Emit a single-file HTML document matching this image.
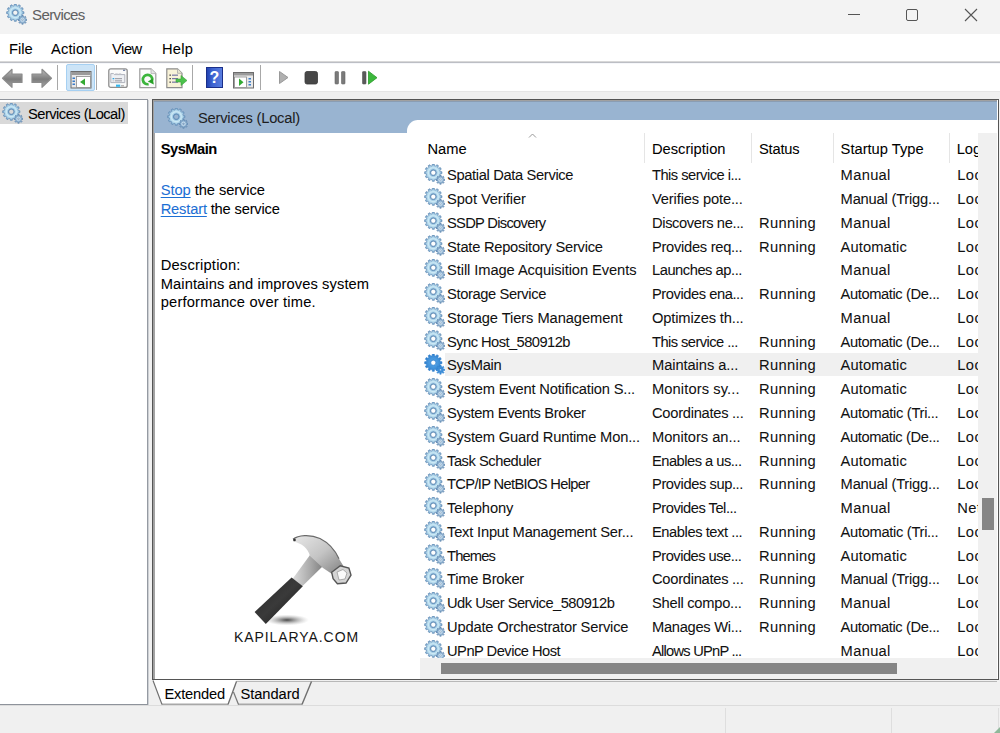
<!DOCTYPE html>
<html><head><meta charset="utf-8">
<style>
*{box-sizing:border-box;margin:0;padding:0}
html,body{width:1000px;height:733px;overflow:hidden;background:#f0f0f0;font-family:"Liberation Sans",sans-serif;font-size:14px;color:#000}
.a{position:absolute}
.t{position:absolute;white-space:nowrap;line-height:16px;-webkit-text-stroke:0.05px currentColor}
.c{position:absolute;white-space:nowrap;line-height:16px;color:#111;font-size:14.7px;-webkit-text-stroke:0.05px currentColor}
.sel{background:#f0f0f0}
a{color:#1c6fd4;text-decoration:underline;text-decoration-thickness:1.4px;text-decoration-skip-ink:none;text-underline-offset:2px}
</style></head><body>
<svg width="0" height="0" style="position:absolute">
<defs>
<radialGradient id="gg" cx="9.3" cy="8.7" r="8.8" gradientUnits="userSpaceOnUse">
<stop offset="0" stop-color="#3a6897"/><stop offset="0.3" stop-color="#4f7fae"/><stop offset="0.4" stop-color="#9cc6e2"/><stop offset="0.55" stop-color="#cdeaf6"/><stop offset="0.78" stop-color="#a6cee6"/><stop offset="1" stop-color="#6893bd"/>
</radialGradient>
<radialGradient id="gs" cx="16.5" cy="15.8" r="4.6" gradientUnits="userSpaceOnUse">
<stop offset="0" stop-color="#ffffff"/><stop offset="0.25" stop-color="#dcecf6"/><stop offset="0.5" stop-color="#9fc0dc"/><stop offset="1" stop-color="#6a90b8"/>
</radialGradient>
<radialGradient id="gb" cx="9.3" cy="8.7" r="8.8" gradientUnits="userSpaceOnUse">
<stop offset="0" stop-color="#2c74c0"/><stop offset="0.4" stop-color="#4a9ae0"/><stop offset="0.7" stop-color="#3e8fd8"/><stop offset="1" stop-color="#2f7ac6"/>
</radialGradient>
<symbol id="gear" viewBox="0 0 21 21">
<path fill="url(#gg)" stroke="#6790b9" stroke-width="0.7" fill-rule="evenodd" d="M8.10 1.80 L8.35 0.05 L10.25 0.05 L10.50 1.80 L11.71 2.13 L12.80 0.73 L14.45 1.69 L13.79 3.33 L14.67 4.21 L16.31 3.55 L17.27 5.20 L15.87 6.29 L16.20 7.50 L17.95 7.75 L17.95 9.65 L16.20 9.90 L15.87 11.11 L17.27 12.20 L16.31 13.85 L14.67 13.19 L13.79 14.07 L14.45 15.71 L12.80 16.67 L11.71 15.27 L10.50 15.60 L10.25 17.35 L8.35 17.35 L8.10 15.60 L6.89 15.27 L5.80 16.67 L4.15 15.71 L4.81 14.07 L3.93 13.19 L2.29 13.85 L1.33 12.20 L2.73 11.11 L2.40 9.90 L0.65 9.65 L0.65 7.75 L2.40 7.50 L2.73 6.29 L1.33 5.20 L2.29 3.55 L3.93 4.21 L4.81 3.33 L4.15 1.69 L5.80 0.73 L6.89 2.13Z M11.80 8.70 A2.5 2.5 0 1 0 6.80 8.70 A2.5 2.5 0 1 0 11.80 8.70Z"/>
<path fill="url(#gs)" stroke="#5e86ae" stroke-width="0.6" fill-rule="evenodd" d="M15.76 12.79 L15.85 11.35 L17.15 11.35 L17.24 12.79 L18.11 13.15 L19.19 12.19 L20.11 13.11 L19.15 14.19 L19.51 15.06 L20.95 15.15 L20.95 16.45 L19.51 16.54 L19.15 17.41 L20.11 18.49 L19.19 19.41 L18.11 18.45 L17.24 18.81 L17.15 20.25 L15.85 20.25 L15.76 18.81 L14.89 18.45 L13.81 19.41 L12.89 18.49 L13.85 17.41 L13.49 16.54 L12.05 16.45 L12.05 15.15 L13.49 15.06 L13.85 14.19 L12.89 13.11 L13.81 12.19 L14.89 13.15Z M17.40 15.80 A0.9 0.9 0 1 0 15.60 15.80 A0.9 0.9 0 1 0 17.40 15.80Z"/>
</symbol>
<symbol id="gearb" viewBox="0 0 21 21">
<path fill="url(#gb)" stroke="#2f7fcf" stroke-width="0.6" fill-rule="evenodd" d="M8.10 1.80 L8.35 0.05 L10.25 0.05 L10.50 1.80 L11.71 2.13 L12.80 0.73 L14.45 1.69 L13.79 3.33 L14.67 4.21 L16.31 3.55 L17.27 5.20 L15.87 6.29 L16.20 7.50 L17.95 7.75 L17.95 9.65 L16.20 9.90 L15.87 11.11 L17.27 12.20 L16.31 13.85 L14.67 13.19 L13.79 14.07 L14.45 15.71 L12.80 16.67 L11.71 15.27 L10.50 15.60 L10.25 17.35 L8.35 17.35 L8.10 15.60 L6.89 15.27 L5.80 16.67 L4.15 15.71 L4.81 14.07 L3.93 13.19 L2.29 13.85 L1.33 12.20 L2.73 11.11 L2.40 9.90 L0.65 9.65 L0.65 7.75 L2.40 7.50 L2.73 6.29 L1.33 5.20 L2.29 3.55 L3.93 4.21 L4.81 3.33 L4.15 1.69 L5.80 0.73 L6.89 2.13Z M11.80 8.70 A2.5 2.5 0 1 0 6.80 8.70 A2.5 2.5 0 1 0 11.80 8.70Z"/>
<path fill="#3d8ed8" stroke="#2f7fcf" stroke-width="0.5" fill-rule="evenodd" d="M15.76 12.79 L15.85 11.35 L17.15 11.35 L17.24 12.79 L18.11 13.15 L19.19 12.19 L20.11 13.11 L19.15 14.19 L19.51 15.06 L20.95 15.15 L20.95 16.45 L19.51 16.54 L19.15 17.41 L20.11 18.49 L19.19 19.41 L18.11 18.45 L17.24 18.81 L17.15 20.25 L15.85 20.25 L15.76 18.81 L14.89 18.45 L13.81 19.41 L12.89 18.49 L13.85 17.41 L13.49 16.54 L12.05 16.45 L12.05 15.15 L13.49 15.06 L13.85 14.19 L12.89 13.11 L13.81 12.19 L14.89 13.15Z M17.40 15.80 A0.9 0.9 0 1 0 15.60 15.80 A0.9 0.9 0 1 0 17.40 15.80Z"/>
</symbol>
</defs></svg>

<!-- title bar -->
<div class="a" style="left:0;top:0;width:1000px;height:34px;background:#f3f3f3"></div>
<svg class="a" style="left:6px;top:4px" width="21" height="21"><use href="#gear"/></svg>
<div class="t" style="left:32px;top:6.7px;font-size:15px;letter-spacing:-0.6px;color:#606060">Services</div>
<div class="a" style="left:848px;top:14px;width:12px;height:1px;background:#555"></div>
<div class="a" style="left:906px;top:9px;width:12px;height:12px;border:1px solid #555;border-radius:2px"></div>
<svg class="a" style="left:964px;top:8px" width="14" height="14"><path d="M1 1L13 13M13 1L1 13" stroke="#555" stroke-width="1.1"/></svg>

<!-- menu -->
<div class="a" style="left:0;top:34px;width:1000px;height:28px;background:#fff"></div>
<div class="t" style="left:9px;top:40.9px;font-size:14.7px">File</div>
<div class="t" style="left:51px;top:40.9px;font-size:14.7px;letter-spacing:0.12px">Action</div>
<div class="t" style="left:112px;top:40.9px;font-size:14.7px;letter-spacing:-0.45px">View</div>
<div class="t" style="left:162px;top:40.9px;font-size:14.7px;letter-spacing:0.2px">Help</div>
<div class="a" style="left:0;top:61px;width:1000px;height:1px;background:#d8d8d8"></div>
<div class="a" style="left:0;top:62px;width:1000px;height:1px;background:#bcbec4"></div>

<!-- toolbar -->
<div class="a" style="left:0;top:63px;width:1000px;height:28px;background:#fff"></div>
<div class="a" style="left:0;top:63px;width:1000px;height:1px;background:#f6f7fa"></div>
<div class="a" style="left:0;top:91px;width:1000px;height:1px;background:#e6e6e6"></div>
<!-- back / forward arrows -->
<svg class="a" style="left:1px;top:68px" width="52" height="21">
<defs><linearGradient id="ag" x1="0" y1="0" x2="0" y2="1"><stop offset="0" stop-color="#bdbdbd"/><stop offset="0.55" stop-color="#7c7c7c"/><stop offset="1" stop-color="#a8a8a8"/></linearGradient></defs>
<path d="M1.5 10.3 L11 1.3 L11 6 L21 6 L21 14.5 L11 14.5 L11 19.3 Z" fill="url(#ag)" stroke="#8c8c8c" stroke-width="1.2" stroke-linejoin="round"/>
<path d="M50.5 10.3 L41 1.3 L41 6 L31 6 L31 14.5 L41 14.5 L41 19.3 Z" fill="url(#ag)" stroke="#8c8c8c" stroke-width="1.2" stroke-linejoin="round"/>
</svg>
<div class="a" style="left:57px;top:65px;width:1px;height:25px;background:#a8a8a8"></div>
<!-- selected console tree toggle -->
<div class="a" style="left:66px;top:64px;width:29px;height:27px;background:#cce4f7;border:1px solid #a6d0f2;border-radius:2px"></div>
<svg class="a" style="left:70px;top:71px" width="22" height="18">
<rect x="1" y="0.5" width="20" height="16.5" fill="#e8e8e8" stroke="#6d6d6d" stroke-width="1"/>
<rect x="1.5" y="1" width="19" height="3" fill="#9a9a9a"/>
<rect x="6.5" y="5.5" width="14" height="11" fill="#fff" stroke="#8a8a8a" stroke-width="0.8"/>
<rect x="2.5" y="6.5" width="2.5" height="1.5" fill="#3a7cc8"/><rect x="2.5" y="9.5" width="2.5" height="1.5" fill="#3a7cc8"/><rect x="2.5" y="12.5" width="2.5" height="1.5" fill="#3a7cc8"/>
<path d="M15 7.5 L10 11 L15 14.5 Z" fill="#33aa33"/>
</svg>
<div class="a" style="left:96px;top:65px;width:1px;height:25px;background:#a8a8a8"></div>
<!-- properties -->
<svg class="a" style="left:108px;top:68px" width="20" height="21">
<rect x="0.8" y="0.8" width="18.4" height="18.6" rx="2" fill="#fafafa" stroke="#8e8e8e" stroke-width="1.3"/>
<rect x="15" y="1.6" width="2.2" height="1.4" fill="#7a88a8"/>
<path d="M2.8 5.6 H5.5 L6.5 6.6 H16.8 V14.6 H2.8 Z" fill="#eef0f4" stroke="#a8abb5" stroke-width="0.9"/>
<rect x="7.2" y="5.2" width="2.6" height="1" fill="#d0d2d8"/><rect x="10.6" y="5.2" width="2.6" height="1" fill="#d0d2d8"/>
<rect x="4.6" y="10" width="1.7" height="1.3" fill="#2ea6e6"/><rect x="7" y="10.1" width="7" height="1.1" fill="#9c9ca4"/>
<rect x="4.6" y="12.3" width="1.7" height="1.1" fill="#c4c4c8"/><rect x="7" y="12.3" width="7" height="1.1" fill="#9c9ca4"/>
<rect x="8" y="16.6" width="4.2" height="2.2" fill="#34b6ee"/><rect x="13" y="17" width="3" height="1.6" fill="#b8b8b8"/>
</svg>
<!-- refresh doc -->
<svg class="a" style="left:139px;top:68px" width="18" height="21">
<path d="M0.8 0.8 H12 L16.8 5.6 V19.6 H0.8 Z" fill="#fbfbfb" stroke="#9c9c9c" stroke-width="1.2"/>
<path d="M12 0.8 V5.6 H16.8" fill="#e4e4e4" stroke="#b0b0b0" stroke-width="0.8"/>
<path d="M13.2 12.2 A4.7 4.7 0 1 0 9.6 16.1" fill="none" stroke="#3cb53c" stroke-width="2.7"/>
<path d="M8.8 13.6 L14.8 16.6 L13.8 10.4 Z" fill="#25a025"/>
</svg>
<!-- export list -->
<svg class="a" style="left:166px;top:68px" width="22" height="21">
<path d="M0.8 0.8 H11.5 L16 5.3 V19.6 H0.8 Z" fill="#f8f2d8" stroke="#8c8c8c" stroke-width="1.2"/>
<path d="M11.5 0.8 V5.3 H16" fill="#e8e4d0" stroke="#aaa" stroke-width="0.8"/>
<rect x="3.5" y="6.5" width="1.3" height="1.3" fill="#333"/><rect x="6" y="6.6" width="6" height="1.1" fill="#6a6aa0"/>
<rect x="3.5" y="10" width="1.3" height="1.3" fill="#333"/><rect x="6" y="10.1" width="6" height="1.1" fill="#6a6aa0"/>
<rect x="3.5" y="13.5" width="1.3" height="1.3" fill="#333"/><rect x="6" y="13.6" width="6" height="1.1" fill="#6a6aa0"/>
<path d="M10 11 H15 V7.5 L21 12.5 L15 17.5 V14 H10 Z" fill="#4cc24c" stroke="#3aa03a" stroke-width="0.6"/>
</svg>
<div class="a" style="left:192px;top:65px;width:1px;height:25px;background:#a8a8a8"></div>
<!-- help -->
<svg class="a" style="left:206px;top:67px" width="17" height="21">
<defs><linearGradient id="hg" x1="0" y1="0" x2="1" y2="0"><stop offset="0" stop-color="#1f3fae"/><stop offset="0.35" stop-color="#3c62d0"/><stop offset="1" stop-color="#5b7fe0"/></linearGradient></defs>
<rect x="0.5" y="0.5" width="16" height="20" fill="url(#hg)" stroke="#1a2f8a" stroke-width="1"/>
<text x="8.5" y="16" text-anchor="middle" font-family="Liberation Sans" font-weight="bold" font-size="16" fill="#fff">?</text>
</svg>
<!-- action pane toggle -->
<svg class="a" style="left:233px;top:72px" width="21" height="17">
<rect x="0.5" y="0.5" width="20" height="15.5" fill="#e8e8e8" stroke="#6d6d6d" stroke-width="1"/>
<rect x="1" y="1" width="19" height="2.5" fill="#9a9a9a"/>
<rect x="1.5" y="5" width="12" height="10.5" fill="#fff" stroke="#8a8a8a" stroke-width="0.8"/>
<rect x="15.5" y="6" width="2.5" height="1.5" fill="#3a7cc8"/><rect x="15.5" y="9" width="2.5" height="1.5" fill="#3a7cc8"/><rect x="15.5" y="12" width="2.5" height="1.5" fill="#3a7cc8"/>
<path d="M6 6.5 L10.5 10.2 L6 14 Z" fill="#33aa33"/>
</svg>
<div class="a" style="left:260px;top:65px;width:1px;height:25px;background:#a8a8a8"></div>
<!-- play stop pause resume -->
<svg class="a" style="left:278px;top:70px" width="102" height="16">
<path d="M1.5 1.5 L10 7.5 L1.5 13.5 Z" fill="#b0b0b0" stroke="#999" stroke-width="1" stroke-linejoin="round"/>
<rect x="27" y="1.5" width="12.5" height="12.5" rx="2" fill="#474747" stroke="#3a3a3a" stroke-width="0.8"/>
<rect x="57" y="1.5" width="3.5" height="12.5" rx="0.8" fill="#7a7a7a" stroke="#666" stroke-width="0.6"/>
<rect x="63.5" y="1.5" width="3.5" height="12.5" rx="0.8" fill="#7a7a7a" stroke="#666" stroke-width="0.6"/>
<rect x="84.5" y="1.5" width="3.5" height="12.5" rx="0.8" fill="#5a5a5a" stroke="#555" stroke-width="0.6"/>
<path d="M90.5 1.2 L99 7.7 L90.5 14.2 Z" fill="#3cb83c" stroke="#2a9a2a" stroke-width="0.8" stroke-linejoin="round"/>
</svg>


<!-- left pane -->
<div class="a" style="left:0;top:99px;width:148px;height:606px;background:#fff;border-top:1px solid #8e939b;border-right:1px solid #959aa2;border-bottom:1px solid #8e939b"></div>
<div class="a" style="left:0;top:102px;width:128px;height:22px;background:#d9d9d9"></div>
<svg class="a" style="left:2px;top:103px" width="21" height="21"><use href="#gear"/></svg>
<div class="t" style="left:28px;top:105.5px;font-size:14.7px;letter-spacing:-0.53px">Services (Local)</div>

<!-- right pane -->
<div class="a" style="left:152px;top:99px;width:847px;height:581px;background:#fff;border:1px solid #555"></div>
<div class="a" style="left:153px;top:100px;width:844px;height:1px;background:#a0a0a0"></div>
<div class="a" style="left:153px;top:100px;width:1px;height:579px;background:#a0a0a0"></div>
<div class="a" style="left:154px;top:101px;width:1px;height:578px;background:#a4a4a4"></div>
<div class="a" style="left:148px;top:100px;width:1px;height:605px;background:#cdd0d4"></div>
<div class="a" style="left:154px;top:101px;width:843px;height:19px;background:#99b4d1"></div>
<div class="a" style="left:154px;top:101px;width:843px;height:1px;background:#8a9db3"></div>
<div class="a" style="left:154px;top:120px;width:263px;height:13px;background:#99b4d1"></div>
<div class="a" style="left:407px;top:120px;width:40px;height:14px;background:#fff;border-top-left-radius:11px"></div>
<svg class="a" style="left:167px;top:108px" width="21" height="21"><use href="#gear"/></svg>
<div class="t" style="left:198px;top:109.5px;font-size:14.7px;letter-spacing:-0.21px;color:#1e1e1e">Services (Local)</div>

<!-- extended description -->
<div class="t" style="left:160.7px;top:140.5px;font-size:14.7px;letter-spacing:-0.5px;font-weight:bold">SysMain</div>
<div class="t" style="left:160.7px;top:181.7px;font-size:14.7px;letter-spacing:-0.067px"><a>Stop</a> the service</div>
<div class="t" style="left:160.7px;top:200.5px;font-size:14.7px;letter-spacing:-0.178px"><a>Restart</a> the service</div>
<div class="t" style="left:160.7px;top:257px;font-size:14.7px;letter-spacing:0.2px">Description:</div>
<div class="t" style="left:160.7px;top:276px;font-size:14.7px;letter-spacing:0.096px">Maintains and improves system</div>
<div class="t" style="left:160.7px;top:294px;font-size:14.7px;letter-spacing:0.19px">performance over time.</div>

<svg class="a" style="left:240px;top:530px" width="120" height="100">
<defs>
<linearGradient id="hm" x1="0" y1="0" x2="1" y2="1"><stop offset="0" stop-color="#e8e8e8"/><stop offset="0.5" stop-color="#c4c4c4"/><stop offset="1" stop-color="#7c7c7c"/></linearGradient>
<linearGradient id="hn" x1="0" y1="0" x2="1" y2="0"><stop offset="0" stop-color="#dcdcdc"/><stop offset="0.6" stop-color="#a8a8a8"/><stop offset="1" stop-color="#808080"/></linearGradient>
<radialGradient id="sh" cx="0.5" cy="0.5" r="0.5"><stop offset="0" stop-color="#333" stop-opacity="0.9"/><stop offset="1" stop-color="#aaa" stop-opacity="0"/></radialGradient>
<linearGradient id="hd" x1="0" y1="0" x2="1" y2="1"><stop offset="0" stop-color="#262626"/><stop offset="0.5" stop-color="#3a3a3a"/><stop offset="1" stop-color="#141414"/></linearGradient>
</defs>
<ellipse cx="47" cy="90" rx="22" ry="5.5" fill="url(#sh)"/>
<path d="M70 25 L83 36 L61.5 57 L52.5 49 Z" fill="url(#hn)"/>
<path d="M51.6 47.5 L62.8 56.2 L25.8 94 L14.6 82 Z" fill="url(#hd)"/>
<path d="M53 9.3 C58 5, 70 4, 80 8.5 C88 12.5, 95 20, 99 28.7 L104 37 L95 46 L83 38 L70 26 C68 18, 62 13.5, 53 11.5 Z" fill="url(#hm)"/>
<path d="M53 9.3 C58 5, 70 4, 80 8.5 C88 12.5, 95 20, 99 28.7" fill="none" stroke="#6a6a6a" stroke-width="1.2"/>
<path d="M91.7 42.3 L100.3 35.8 L108.9 38 L111 45.1 L106 53 L97.4 53.7 L93.1 48.7 Z" fill="#d4d4d4" stroke="#555" stroke-width="1.4"/>
<path d="M97 42 L103 39.5 L107 43 L105 49 L99 50 Z" fill="#fafafa" stroke="#9a9a9a" stroke-width="0.8"/>
<circle cx="54.5" cy="10" r="1.3" fill="#333"/>
</svg>
<div class="t" style="left:234px;top:629px;font-size:14px;letter-spacing:0.92px;color:#151515;-webkit-text-stroke:0">KAPILARYA.COM</div>


<!-- list -->
<div class="a" style="left:420px;top:133px;width:558px;height:525px;overflow:hidden">
  <div class="t" style="font-size:14.7px;left:7.5px;top:7.7px;letter-spacing:0.0px">Name</div>
  <svg class="a" style="left:108px;top:0px" width="9" height="6"><path d="M1 4.5L4.5 1L8 4.5" fill="none" stroke="#999" stroke-width="1"/></svg>
  <div class="a" style="left:224px;top:0;width:1px;height:30px;background:#e5e5e5"></div>
  <div class="t" style="font-size:14.7px;left:232px;top:7.7px;letter-spacing:0.0px">Description</div>
  <div class="a" style="left:331px;top:0;width:1px;height:30px;background:#e5e5e5"></div>
  <div class="t" style="font-size:14.7px;left:339px;top:7.7px;letter-spacing:-0.2px">Status</div>
  <div class="a" style="left:413px;top:0;width:1px;height:30px;background:#e5e5e5"></div>
  <div class="t" style="font-size:14.7px;left:420.6px;top:7.7px;letter-spacing:0.0px">Startup Type</div>
  <div class="a" style="left:529px;top:0;width:1px;height:30px;background:#e5e5e5"></div>
  <div class="t" style="font-size:14.7px;left:536.7px;top:7.7px;letter-spacing:0">Log On As</div>
<svg class="a" style="left:4px;top:31.00px" width="21" height="21"><use href="#gear"/></svg>
<div class="c" style="left:27px;top:34.20px;letter-spacing:-0.347px">Spatial Data Service</div>
<div class="c" style="left:232px;top:34.20px;letter-spacing:-0.519px">This service i...</div>
<div class="c" style="left:420.6px;top:34.20px;letter-spacing:0.32px">Manual</div>
<div class="c" style="left:537.2px;top:34.20px;letter-spacing:0.5px">Local System</div>
<svg class="a" style="left:4px;top:54.78px" width="21" height="21"><use href="#gear"/></svg>
<div class="c" style="left:27px;top:57.98px;letter-spacing:-0.083px">Spot Verifier</div>
<div class="c" style="left:232px;top:57.98px;letter-spacing:-0.147px">Verifies pote...</div>
<div class="c" style="left:420.6px;top:57.98px;letter-spacing:-0.2px">Manual (Trigg...</div>
<div class="c" style="left:537.2px;top:57.98px;letter-spacing:0.5px">Local System</div>
<svg class="a" style="left:4px;top:78.55px" width="21" height="21"><use href="#gear"/></svg>
<div class="c" style="left:27px;top:81.75px;letter-spacing:-0.7px">SSDP Discovery</div>
<div class="c" style="left:232px;top:81.75px;letter-spacing:-0.371px">Discovers ne...</div>
<div class="c" style="left:339px;top:81.75px;letter-spacing:0.333px">Running</div>
<div class="c" style="left:420.6px;top:81.75px;letter-spacing:0.32px">Manual</div>
<div class="c" style="left:537.2px;top:81.75px;letter-spacing:0.5px">Local System</div>
<svg class="a" style="left:4px;top:102.32px" width="21" height="21"><use href="#gear"/></svg>
<div class="c" style="left:27px;top:105.52px;letter-spacing:-0.248px">State Repository Service</div>
<div class="c" style="left:232px;top:105.52px;letter-spacing:-0.286px">Provides req...</div>
<div class="c" style="left:339px;top:105.52px;letter-spacing:0.333px">Running</div>
<div class="c" style="left:420.6px;top:105.52px;letter-spacing:0.113px">Automatic</div>
<div class="c" style="left:537.2px;top:105.52px;letter-spacing:0.5px">Local System</div>
<svg class="a" style="left:4px;top:126.10px" width="21" height="21"><use href="#gear"/></svg>
<div class="c" style="left:27px;top:129.30px;letter-spacing:-0.079px">Still Image Acquisition Events</div>
<div class="c" style="left:232px;top:129.30px;letter-spacing:-0.462px">Launches ap...</div>
<div class="c" style="left:420.6px;top:129.30px;letter-spacing:0.32px">Manual</div>
<div class="c" style="left:537.2px;top:129.30px;letter-spacing:0.5px">Local System</div>
<svg class="a" style="left:4px;top:149.88px" width="21" height="21"><use href="#gear"/></svg>
<div class="c" style="left:27px;top:153.07px;letter-spacing:-0.364px">Storage Service</div>
<div class="c" style="left:232px;top:153.07px;letter-spacing:-0.443px">Provides ena...</div>
<div class="c" style="left:339px;top:153.07px;letter-spacing:0.333px">Running</div>
<div class="c" style="left:420.6px;top:153.07px;letter-spacing:-0.4px">Automatic (De...</div>
<div class="c" style="left:537.2px;top:153.07px;letter-spacing:0.5px">Local System</div>
<svg class="a" style="left:4px;top:173.65px" width="21" height="21"><use href="#gear"/></svg>
<div class="c" style="left:27px;top:176.85px;letter-spacing:-0.074px">Storage Tiers Management</div>
<div class="c" style="left:232px;top:176.85px;letter-spacing:-0.157px">Optimizes th...</div>
<div class="c" style="left:420.6px;top:176.85px;letter-spacing:0.32px">Manual</div>
<div class="c" style="left:537.2px;top:176.85px;letter-spacing:0.5px">Local System</div>
<svg class="a" style="left:4px;top:197.42px" width="21" height="21"><use href="#gear"/></svg>
<div class="c" style="left:27px;top:200.62px;letter-spacing:-0.55px">Sync Host_580912b</div>
<div class="c" style="left:232px;top:200.62px;letter-spacing:-0.56px">This service ...</div>
<div class="c" style="left:339px;top:200.62px;letter-spacing:0.333px">Running</div>
<div class="c" style="left:420.6px;top:200.62px;letter-spacing:-0.4px">Automatic (De...</div>
<div class="c" style="left:537.2px;top:200.62px;letter-spacing:0.5px">Local System</div>
<div class="a sel" style="left:25px;top:219.70px;width:533px;height:23.5px"></div>
<svg class="a" style="left:4px;top:221.20px" width="21" height="21"><use href="#gearb"/></svg>
<div class="c" style="left:27px;top:224.40px;letter-spacing:-0.267px">SysMain</div>
<div class="c" style="left:232px;top:224.40px;letter-spacing:-0.077px">Maintains a...</div>
<div class="c" style="left:339px;top:224.40px;letter-spacing:0.333px">Running</div>
<div class="c" style="left:420.6px;top:224.40px;letter-spacing:0.113px">Automatic</div>
<div class="c" style="left:537.2px;top:224.40px;letter-spacing:0.5px">Local System</div>
<svg class="a" style="left:4px;top:244.98px" width="21" height="21"><use href="#gear"/></svg>
<div class="c" style="left:27px;top:248.18px;letter-spacing:-0.183px">System Event Notification S...</div>
<div class="c" style="left:232px;top:248.18px;letter-spacing:0.1px">Monitors sy...</div>
<div class="c" style="left:339px;top:248.18px;letter-spacing:0.333px">Running</div>
<div class="c" style="left:420.6px;top:248.18px;letter-spacing:0.113px">Automatic</div>
<div class="c" style="left:537.2px;top:248.18px;letter-spacing:0.5px">Local System</div>
<svg class="a" style="left:4px;top:268.75px" width="21" height="21"><use href="#gear"/></svg>
<div class="c" style="left:27px;top:271.95px;letter-spacing:-0.337px">System Events Broker</div>
<div class="c" style="left:232px;top:271.95px;letter-spacing:-0.271px">Coordinates ...</div>
<div class="c" style="left:339px;top:271.95px;letter-spacing:0.333px">Running</div>
<div class="c" style="left:420.6px;top:271.95px;letter-spacing:-0.312px">Automatic (Tri...</div>
<div class="c" style="left:537.2px;top:271.95px;letter-spacing:0.5px">Local System</div>
<svg class="a" style="left:4px;top:292.52px" width="21" height="21"><use href="#gear"/></svg>
<div class="c" style="left:27px;top:295.72px;letter-spacing:-0.173px">System Guard Runtime Mon...</div>
<div class="c" style="left:232px;top:295.72px;letter-spacing:-0.023px">Monitors an...</div>
<div class="c" style="left:339px;top:295.72px;letter-spacing:0.333px">Running</div>
<div class="c" style="left:420.6px;top:295.72px;letter-spacing:-0.4px">Automatic (De...</div>
<div class="c" style="left:537.2px;top:295.72px;letter-spacing:0.5px">Local System</div>
<svg class="a" style="left:4px;top:316.30px" width="21" height="21"><use href="#gear"/></svg>
<div class="c" style="left:27px;top:319.50px;letter-spacing:-0.462px">Task Scheduler</div>
<div class="c" style="left:232px;top:319.50px;letter-spacing:-0.514px">Enables a us...</div>
<div class="c" style="left:339px;top:319.50px;letter-spacing:0.333px">Running</div>
<div class="c" style="left:420.6px;top:319.50px;letter-spacing:0.113px">Automatic</div>
<div class="c" style="left:537.2px;top:319.50px;letter-spacing:0.5px">Local System</div>
<svg class="a" style="left:4px;top:340.07px" width="21" height="21"><use href="#gear"/></svg>
<div class="c" style="left:27px;top:343.27px;letter-spacing:-0.66px">TCP/IP NetBIOS Helper</div>
<div class="c" style="left:232px;top:343.27px;letter-spacing:-0.414px">Provides sup...</div>
<div class="c" style="left:339px;top:343.27px;letter-spacing:0.333px">Running</div>
<div class="c" style="left:420.6px;top:343.27px;letter-spacing:-0.2px">Manual (Trigg...</div>
<div class="c" style="left:537.2px;top:343.27px;letter-spacing:0.5px">Local System</div>
<svg class="a" style="left:4px;top:363.85px" width="21" height="21"><use href="#gear"/></svg>
<div class="c" style="left:27px;top:367.05px;letter-spacing:-0.062px">Telephony</div>
<div class="c" style="left:232px;top:367.05px;letter-spacing:-0.486px">Provides Tel...</div>
<div class="c" style="left:420.6px;top:367.05px;letter-spacing:0.32px">Manual</div>
<div class="c" style="left:537.2px;top:367.05px;letter-spacing:0.5px">Network Service</div>
<svg class="a" style="left:4px;top:387.62px" width="21" height="21"><use href="#gear"/></svg>
<div class="c" style="left:27px;top:390.82px;letter-spacing:-0.196px">Text Input Management Ser...</div>
<div class="c" style="left:232px;top:390.82px;letter-spacing:-0.433px">Enables text ...</div>
<div class="c" style="left:339px;top:390.82px;letter-spacing:0.333px">Running</div>
<div class="c" style="left:420.6px;top:390.82px;letter-spacing:-0.312px">Automatic (Tri...</div>
<div class="c" style="left:537.2px;top:390.82px;letter-spacing:0.5px">Local System</div>
<svg class="a" style="left:4px;top:411.40px" width="21" height="21"><use href="#gear"/></svg>
<div class="c" style="left:27px;top:414.60px;letter-spacing:-0.84px">Themes</div>
<div class="c" style="left:232px;top:414.60px;letter-spacing:-0.514px">Provides use...</div>
<div class="c" style="left:339px;top:414.60px;letter-spacing:0.333px">Running</div>
<div class="c" style="left:420.6px;top:414.60px;letter-spacing:0.113px">Automatic</div>
<div class="c" style="left:537.2px;top:414.60px;letter-spacing:0.5px">Local System</div>
<svg class="a" style="left:4px;top:435.17px" width="21" height="21"><use href="#gear"/></svg>
<div class="c" style="left:27px;top:438.37px;letter-spacing:-0.22px">Time Broker</div>
<div class="c" style="left:232px;top:438.37px;letter-spacing:-0.271px">Coordinates ...</div>
<div class="c" style="left:339px;top:438.37px;letter-spacing:0.333px">Running</div>
<div class="c" style="left:420.6px;top:438.37px;letter-spacing:-0.2px">Manual (Trigg...</div>
<div class="c" style="left:537.2px;top:438.37px;letter-spacing:0.5px">Local System</div>
<svg class="a" style="left:4px;top:458.95px" width="21" height="21"><use href="#gear"/></svg>
<div class="c" style="left:27px;top:462.15px;letter-spacing:-0.513px">Udk User Service_580912b</div>
<div class="c" style="left:232px;top:462.15px;letter-spacing:-0.246px">Shell compo...</div>
<div class="c" style="left:339px;top:462.15px;letter-spacing:0.333px">Running</div>
<div class="c" style="left:420.6px;top:462.15px;letter-spacing:0.32px">Manual</div>
<div class="c" style="left:537.2px;top:462.15px;letter-spacing:0.5px">Local System</div>
<svg class="a" style="left:4px;top:482.72px" width="21" height="21"><use href="#gear"/></svg>
<div class="c" style="left:27px;top:485.92px;letter-spacing:-0.177px">Update Orchestrator Service</div>
<div class="c" style="left:232px;top:485.92px;letter-spacing:-0.292px">Manages Wi...</div>
<div class="c" style="left:339px;top:485.92px;letter-spacing:0.333px">Running</div>
<div class="c" style="left:420.6px;top:485.92px;letter-spacing:-0.4px">Automatic (De...</div>
<div class="c" style="left:537.2px;top:485.92px;letter-spacing:0.5px">Local System</div>
<svg class="a" style="left:4px;top:506.50px" width="21" height="21"><use href="#gear"/></svg>
<div class="c" style="left:27px;top:509.70px;letter-spacing:-0.513px">UPnP Device Host</div>
<div class="c" style="left:232px;top:509.70px;letter-spacing:-0.771px">Allows UPnP ...</div>
<div class="c" style="left:420.6px;top:509.70px;letter-spacing:0.32px">Manual</div>
<div class="c" style="left:537.2px;top:509.70px;letter-spacing:0.5px">Local System</div>
</div>
<!-- vertical scrollbar -->
<div class="a" style="left:978px;top:133px;width:19px;height:546px;background:#f0f0f0"></div>
<div class="a" style="left:982px;top:498px;width:12px;height:32px;background:#858585"></div>
<!-- horizontal scrollbar -->
<div class="a" style="left:420px;top:658px;width:558px;height:21px;background:#f0f0f0"></div>
<div class="a" style="left:441px;top:663px;width:456px;height:11px;background:#858585"></div>

<!-- tabs -->
<svg class="a" style="left:148px;top:679px" width="852" height="28">
<path d="M5 2.5 H849" stroke="#b8b8b8" stroke-width="1"/>
<path d="M86 3 L163.5 3 L154 25 L90 25 Z" fill="#f0f0f0"/>
<path d="M90 25.2 H154" stroke="#a8a8a8" stroke-width="1.4"/>
<path d="M85.5 13 L90.5 25.5" fill="none" stroke="#777" stroke-width="1.2"/>
<path d="M154 25.5 L163.5 2.5" fill="none" stroke="#6e6e6e" stroke-width="1.4"/>
<path d="M5 1 L88.5 1 L80 25 L14 25 Z" fill="#fff"/>
<path d="M14 25.2 H80" stroke="#a8a8a8" stroke-width="1.4"/>
<path d="M5 1.5 L14 25.5" fill="none" stroke="#6e6e6e" stroke-width="1.2"/>
<path d="M80 25.5 L88.5 2.5" fill="none" stroke="#6e6e6e" stroke-width="1.3"/>
</svg>
<div class="t" style="left:164.5px;top:685.7px;font-size:14.7px;letter-spacing:-0.21px">Extended</div>
<div class="t" style="left:240.5px;top:685.7px;font-size:14.7px;letter-spacing:-0.07px">Standard</div>

<!-- status bar -->
<div class="a" style="left:0;top:705px;width:1000px;height:1px;background:#dcdcdc"></div>
<div class="a" style="left:725px;top:708px;width:1px;height:25px;background:#dedede"></div>
<div class="a" style="left:891px;top:708px;width:1px;height:25px;background:#dedede"></div>
<div class="a" style="left:998px;top:708px;width:1px;height:22px;background:#dedede"></div>
<svg class="a" style="left:994px;top:727px" width="6" height="6"><path d="M6 0 L6 6 L0 6 Z" fill="#8fb89a"/></svg>
</body></html>
